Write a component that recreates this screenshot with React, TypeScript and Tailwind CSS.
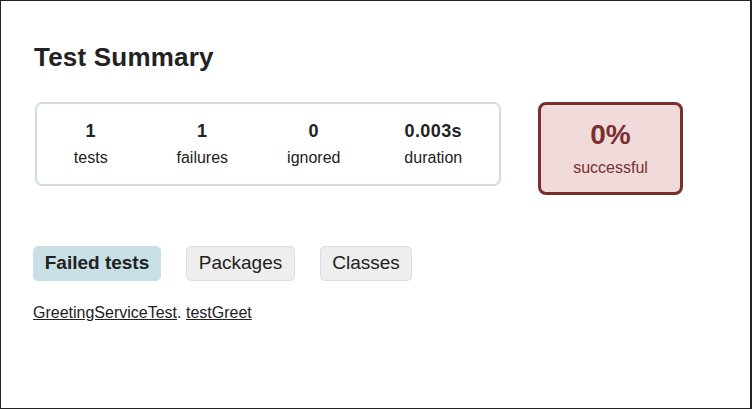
export default function App() {
  const stats = [
    { value: '1', label: 'tests', w: 'w-[108px]' },
    { value: '1', label: 'failures', w: 'w-[116px]' },
    { value: '0', label: 'ignored', w: 'w-[108px]' },
    { value: '0.003s', label: 'duration', w: 'w-[132px]' },
  ];

  return (
    <div className="w-[752px] h-[409px] bg-white border border-r-2 border-[#222] text-[#222] font-['Liberation_Sans',Arial,sans-serif] overflow-hidden">
      <div className="pl-[32px] pt-[41px]">
        <h1 className="text-[26px] font-bold leading-[30px] ml-[1px] tracking-[0.2px]">Test Summary</h1>

        {/* summary boxes */}
        <div className="flex items-start mt-[30px]">
          <div className="w-[466px] h-[84px] ml-[2px] border-2 border-[#d0dde1] rounded-[7px] flex items-center">
            {stats.map((s, i) => (
              <div key={i} className={`flex flex-col items-center ${s.w}`}>
                <span className="text-[18px] font-bold leading-[20px] tracking-[0.4px]">{s.value}</span>
                <span className="text-[16px] leading-[20px] mt-[7px]">{s.label}</span>
              </div>
            ))}
          </div>
          <div className="ml-[37px] w-[145px] h-[93px] border-[3px] border-[#7a2f2f] rounded-[8px] bg-[#f1dada] flex flex-col items-center justify-center text-[#7a2f2f]">
            <span className="text-[28px] font-bold leading-[32px]">0%</span>
            <span className="text-[16px] leading-[20px] mt-[7px]">successful</span>
          </div>
        </div>

        {/* tabs */}
        <div className="flex mt-[51px] gap-[25px]">
          <div className="h-[35px] w-[128px] rounded-[5px] bg-[#c8dfe5] border border-[#c8dfe5] flex items-center justify-center text-[19px] font-bold">Failed tests</div>
          <div className="h-[35px] w-[109px] rounded-[5px] bg-[#eeeeee] border border-[#dddddd] flex items-center justify-center text-[19px]">Packages</div>
          <div className="h-[35px] w-[92px] rounded-[5px] bg-[#eeeeee] border border-[#dddddd] flex items-center justify-center text-[19px]">Classes</div>
        </div>

        <div className="mt-[22px] text-[16px] leading-[20px]">
          <a className="underline">GreetingServiceTest</a>. <a className="underline">testGreet</a>
        </div>
      </div>
    </div>
  );
}
